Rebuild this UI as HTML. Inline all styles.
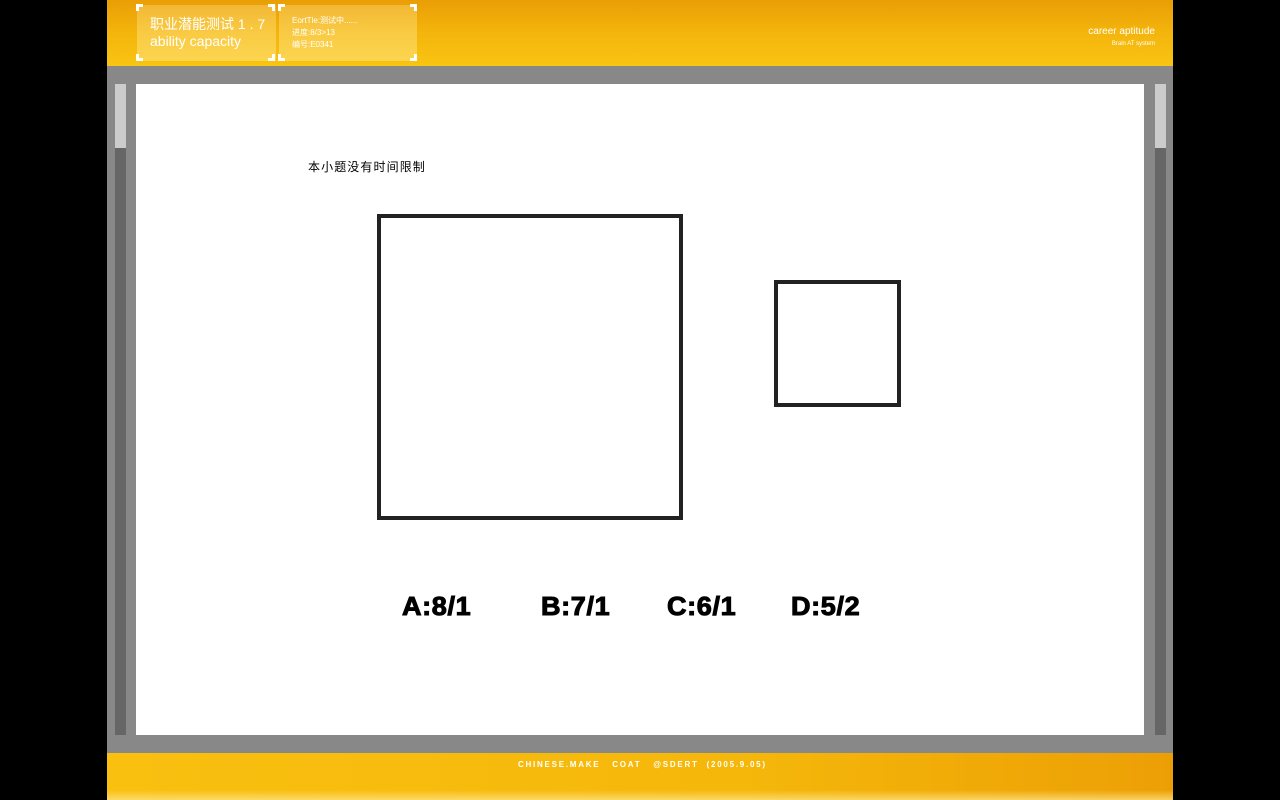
<!DOCTYPE html>
<html><head><meta charset="utf-8"><style>
*{margin:0;padding:0;box-sizing:border-box}
body{width:1280px;height:800px;background:#000;position:relative;overflow:hidden;font-family:"Liberation Sans","Noto Sans CJK SC",sans-serif}
.a{position:absolute}
#hdr{left:107px;top:0;width:1066px;height:66px;background:linear-gradient(#e99e05 0%,#f4b50c 50%,#f9c412 100%)}
#gray{left:107px;top:66px;width:1066px;height:687px;background:#888}
#ftr{left:107px;top:753px;width:1066px;height:47px;background:linear-gradient(90deg,#f9c010,#f5b70a 60%,#ec9f05);}
.card{background:linear-gradient(rgba(255,225,140,0.35),rgba(255,225,120,0.6));color:#fff}
.br{border:3px solid #fff;width:7px;height:7px}
.ans{font-size:26px;font-weight:bold;color:#000;line-height:30px;letter-spacing:0.6px;-webkit-text-stroke:1px #000;transform-origin:left;transform:scaleX(1.04)}
</style></head><body>
<div class="a" id="hdr"></div>
<div class="a card" style="left:137px;top:5px;width:139px;height:56px"></div>
<div class="a card" style="left:279px;top:5px;width:138px;height:56px"></div>
<div class="a" style="left:150px;top:16px;color:#fff;font-size:14px;line-height:17px">职业潜能测试 1 . 7<br>ability capacity</div>
<div class="a" style="left:292px;top:15px;color:#fff;font-size:8px;line-height:12px">EortTle:测试中......<br>进度:8/3>13<br>编号:E0341</div>
<div class="a br" style="left:136px;top:4px;border-right:0;border-bottom:0"></div>
<div class="a br" style="left:268px;top:4px;border-left:0;border-bottom:0"></div>
<div class="a br" style="left:136px;top:54px;border-right:0;border-top:0"></div>
<div class="a br" style="left:268px;top:54px;border-left:0;border-top:0"></div>
<div class="a br" style="left:278px;top:4px;border-right:0;border-bottom:0"></div>
<div class="a br" style="left:410px;top:4px;border-left:0;border-bottom:0"></div>
<div class="a br" style="left:278px;top:54px;border-right:0;border-top:0"></div>
<div class="a br" style="left:410px;top:54px;border-left:0;border-top:0"></div>
<div class="a" style="right:125px;top:26px;color:#fff;font-size:10px;text-align:right;line-height:11px">career aptitude<br><span style="font-size:6px">Brain AT system</span></div>
<div class="a" id="gray"></div>
<div class="a" style="left:115px;top:84px;width:11px;height:651px;background:#666"></div>
<div class="a" style="left:115px;top:84px;width:11px;height:64px;background:#ccc"></div>
<div class="a" style="left:1155px;top:84px;width:11px;height:651px;background:#666"></div>
<div class="a" style="left:1155px;top:84px;width:11px;height:64px;background:#ccc"></div>
<div class="a" style="left:136px;top:84px;width:1008px;height:651px;background:#fff"></div>
<div class="a" style="left:308px;top:158px;font-size:12px;color:#000;letter-spacing:1.1px">本小题没有时间限制</div>
<div class="a" style="left:377px;top:214px;width:306px;height:306px;border:4px solid #222"></div>
<div class="a" style="left:774px;top:280px;width:127px;height:127px;border:4px solid #222"></div>
<div class="a ans" style="left:402px;top:591px">A:8/1</div>
<div class="a ans" style="left:541px;top:591px">B:7/1</div>
<div class="a ans" style="left:667px;top:591px">C:6/1</div>
<div class="a ans" style="left:791px;top:591px">D:5/2</div>
<div class="a" id="ftr"></div>
<div class="a" style="left:518px;top:760px;color:#fff;font-size:8px;letter-spacing:1.75px;font-weight:bold;white-space:pre">CHINESE.MAKE   COAT   @SDERT  (2005.9.05)</div>
<div class="a" style="left:107px;top:790px;width:1066px;height:10px;background:linear-gradient(rgba(255,230,140,0),rgba(255,230,140,0.7))"></div>
</body></html>
